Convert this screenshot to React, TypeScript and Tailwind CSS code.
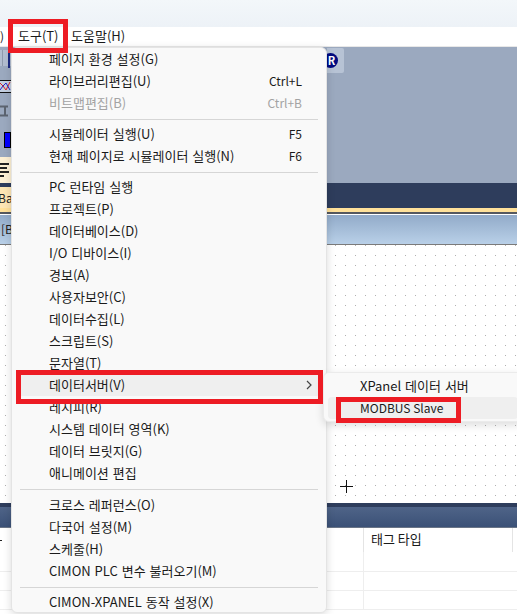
const font = "font-['Noto_Sans_CJK_KR','Noto_Sans',sans-serif]";

type Item = { label: string; shortcut?: string; disabled?: boolean; active?: boolean };

const groups: Item[][] = [
  [
    { label: "페이지 환경 설정(G)" },
    { label: "라이브러리편집(U)", shortcut: "Ctrl+L" },
    { label: "비트맵편집(B)", shortcut: "Ctrl+B", disabled: true },
  ],
  [
    { label: "시뮬레이터 실행(U)", shortcut: "F5" },
    { label: "현재 페이지로 시뮬레이터 실행(N)", shortcut: "F6" },
  ],
  [
    { label: "PC 런타임 실행" },
    { label: "프로젝트(P)" },
    { label: "데이터베이스(D)" },
    { label: "I/O 디바이스(I)" },
    { label: "경보(A)" },
    { label: "사용자보안(C)" },
    { label: "데이터수집(L)" },
    { label: "스크립트(S)" },
    { label: "문자열(T)" },
    { label: "데이터서버(V)", active: true },
    { label: "레시피(R)" },
    { label: "시스템 데이터 영역(K)" },
    { label: "데이터 브릿지(G)" },
    { label: "애니메이션 편집" },
  ],
  [
    { label: "크로스 레퍼런스(O)" },
    { label: "다국어 설정(M)" },
    { label: "스케줄(H)" },
    { label: "CIMON PLC 변수 불러오기(M)" },
  ],
  [{ label: "CIMON-XPANEL 동작 설정(X)" }],
];

function MenuRow({ item }: { item: Item }) {
  return (
    <div
      className={`mx-[5px] flex h-[22px] items-center justify-between rounded-[4px] pl-[32px] pr-[19px] ${
        item.active ? "bg-[#efefef]" : ""
      } ${item.disabled ? "text-[#a3a3a3]" : "text-[#1a1a1a]"}`}
    >
      <span className="-mt-[2px] text-[13px] [word-spacing:1px]">{item.label}</span>
      {item.shortcut && <span className="-mt-[1px] text-[12px]">{item.shortcut}</span>}
      {item.active && (
        <svg width="6" height="10" viewBox="0 0 6 10" className="mr-[-10px]">
          <path d="M1 1l4 4-4 4" fill="none" stroke="#444" strokeWidth="1.2" />
        </svg>
      )}
    </div>
  );
}

function RedBox({ className }: { className: string }) {
  return <div className={`absolute border-[5px] border-[#ed1c24] ${className}`} />;
}

function ToolbarStrip() {
  return (
    <div className="w-[11px] overflow-hidden">
      <div className="mt-[3px] flex h-[16px] gap-[5px] bg-[#b2bdd0] pl-[2px]">
        <div className="w-[1px] bg-[#8e99ab]" />
        <div className="h-[18px] w-[2px] bg-[#1c2a80]" />
      </div>
      <svg width="11" height="13" viewBox="0 0 11 13" className="mt-[14px] block bg-[#c3cfe0]">
        <path d="M0 .5h11M0 12.5h11" stroke="#111" />
        <path d="M0 3l3 3 3 4 4-8" fill="none" stroke="#d22" />
        <path d="M0 10l3-4 3-3 4 7" fill="none" stroke="#22c" />
      </svg>
      <svg width="11" height="13" viewBox="0 0 11 13" className="mt-[12px] block">
        <path d="M0 1.5h8M5 1.5v9M0 10.5h8" fill="none" stroke="#5c6470" strokeWidth="2" />
      </svg>
      <div className="ml-[4px] mt-[14px] h-[16px] border border-black bg-[#0000ff]" />
      <div className="mt-[9px] flex h-[26px] flex-col gap-[2px] bg-[#fdf0d4] pt-[6px]">
        <div className="h-[2px] w-[9px] bg-[#222]" />
        <div className="h-[2px] w-[7px] bg-[#222]" />
        <div className="h-[2px] w-[9px] bg-[#222]" />
        <div className="h-[2px] w-[4px] bg-[#222]" />
      </div>
    </div>
  );
}

export default function App() {
  return (
    <div className={`${font} relative h-[614px] w-[517px] overflow-hidden bg-white text-[13px] leading-none`}>
      {/* window background */}
      <div className="h-[27px] bg-gradient-to-b from-[#f3f7fa] to-[#edf2f7]" />
      <div className="flex h-[19px] items-center bg-white pb-[2px] text-[#1a1a1a]">
        <span className="w-[18px] text-[12px]">)</span>
        <span className="w-[53px]">도구(T)</span>
        <span>도움말(H)</span>
      </div>
      <div className="h-[1px] bg-[#e8e8e8]" />
      <div className="flex h-[136px] bg-[#9ba9bf]">
        <ToolbarStrip />
        <div className="ml-[316px] mt-[1px] flex h-[25px] w-[17px] items-center rounded-r-[2px] bg-[#b7c3d5]">
          <span className="-ml-[4px] flex h-[15px] w-[15px] shrink-0 items-center justify-center rounded-full bg-[#000a80] pl-[2px] text-[11px] font-bold text-white">
            R
          </span>
        </div>
      </div>
      <div className="h-[25px] bg-[#2e3d5c] pt-[4px]">
        <div className="h-[21px] w-[11px] overflow-hidden bg-[#fde6b4] pt-[5px] text-[12px] text-[#222]">
          <span className="-ml-[2px] block w-[30px]">Bas</span>
        </div>
      </div>
      <div className="h-[4px] bg-[#ffe19a]" />
      <div className="h-[2px] bg-[#55585e]" />
      <div className="h-[1px] bg-white" />
      <div className="h-[29px] bg-gradient-to-b from-[#92abc9] to-[#b9d0e8] pl-[1px] pt-[8px] text-[12px] text-[#222]">
        [B
      </div>
      <div className="h-[1px] bg-[#7b7b7b]" />
      <div className="h-[258px] bg-white bg-[length:10px_10px] bg-[linear-gradient(to_right,#ffffff_5px,transparent_5px,transparent_6px,#ffffff_6px),linear-gradient(to_bottom,transparent_1px,#ffffff_1px),linear-gradient(#b0b0b0,#b0b0b0)] pl-[340px] pt-[235px]">
        <svg width="13" height="13" viewBox="0 0 13 13" className="block">
          <path d="M6.5 0v13M0 6.5h13" stroke="#111" strokeWidth="1" />
        </svg>
      </div>
      <div className="h-[4px] bg-[#2e3d5c]" />
      <div className="h-[20px] bg-gradient-to-b from-[#4f6488] to-[#3b5177]" />
      <div className="h-[1px] bg-[#6a7587]" />
      <div className="grid h-[24px] grid-cols-[363px_150px] text-[#1a1a1a]">
        <div className="pt-[12px]">
          <div className="h-[1px] w-[2px] bg-[#222]" />
        </div>
        <div className="flex items-center border-x border-[#e4e4e4] pb-[3px] pl-[7px]">태그 타입</div>
      </div>
      <div className="grid h-[20px] grid-cols-[364px_1fr] border-b border-[#eeeeee]">
        <div className="border-r border-[#eeeeee]" />
      </div>
      <div className="grid h-[19px] grid-cols-[364px_1fr] border-b border-[#eeeeee]">
        <div className="border-r border-[#eeeeee]" />
      </div>
      <div className="grid h-[19px] grid-cols-[364px_1fr] border-b border-[#eeeeee]">
        <div className="border-r border-[#eeeeee]" />
      </div>

      {/* tools menu */}
      <div className="absolute left-[11px] top-[47px] h-[566px] w-[316px] rounded-[6px] border border-[#e4e4e4] bg-[#f9f9f9] shadow-[0_2px_8px_rgba(0,0,0,0.15)]">
        {groups.map((group, i) => (
          <div key={i}>
            {i > 0 && (
              <div className={`mx-[8px] mt-[5px] h-[1px] bg-[#d6d6d6] ${i === 3 ? "mb-[4px]" : "mb-[3px]"}`} />
            )}
            {group.map((item) => (
              <MenuRow key={item.label} item={item} />
            ))}
          </div>
        ))}
      </div>

      {/* data server submenu */}
      <div className="absolute left-[323px] top-[372px] h-[50px] w-[200px] rounded-[6px] border border-[#ebebeb] bg-[#f9f9f9] px-[4px] pt-[2px] text-[12px] text-[#1a1a1a] shadow-[0_3px_8px_rgba(0,0,0,0.14)]">
        <div className="flex h-[22px] items-center pl-[32px] text-[13px] [word-spacing:1px]">
          <span className="-mt-[2px]">XPanel 데이터 서버</span>
        </div>
        <div className="flex h-[22px] items-center rounded-[4px] bg-[#efefef] pl-[32px]">
          <span className="-mt-[1px]">MODBUS Slave</span>
        </div>
      </div>

      <RedBox className="left-[8px] top-[19px] h-[34px] w-[60px]" />
      <RedBox className="left-[16px] top-[370px] h-[34px] w-[307px]" />
      <RedBox className="left-[336px] top-[397px] h-[26px] w-[125px]" />
    </div>
  );
}
